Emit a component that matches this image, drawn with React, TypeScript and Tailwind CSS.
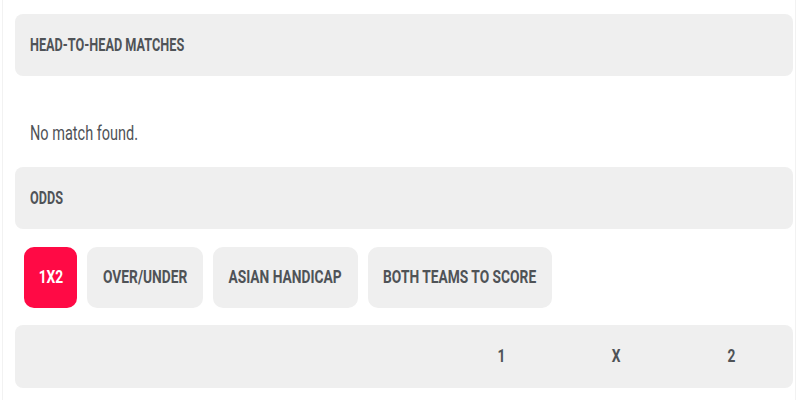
export default function App() {
  const tabs = [
    { label: "1X2", w: "w-[53px]" },
    { label: "OVER/UNDER", w: "w-[116px]" },
    { label: "ASIAN HANDICAP", w: "w-[145px]" },
    { label: "BOTH TEAMS TO SCORE", w: "w-[184px]" },
  ];

  // the source text is horizontally squeezed, so each label gets scale-x
  const squeeze = "inline-block whitespace-nowrap scale-x-[0.725]";

  return (
    <div className="w-[800px] h-[400px] bg-white font-['Roboto',sans-serif] text-[#4f5357]">
      <div className="ml-[2px] w-[794px] h-full border-l border-r border-[#f2f2f2] pl-[12px] pr-[2px] pt-[14px]">
        {/* HEAD TO HEAD */}
        <div className="h-[62px] rounded-lg bg-[#efefef] flex items-center px-[15px]">
          <span className={`${squeeze} origin-left text-[17.5px] font-bold`}>HEAD-TO-HEAD MATCHES</span>
        </div>

        <div className="h-[91px] flex items-end pb-[20px] px-[15px]">
          <span className={`${squeeze} origin-left text-[20px] leading-[28px]`}>No match found.</span>
        </div>

        {/* ODDS */}
        <div className="h-[62px] rounded-lg bg-[#efefef] flex items-center px-[15px]">
          <span className={`${squeeze} origin-left text-[17.5px] font-bold`}>ODDS</span>
        </div>

        <div className="mt-[18px] flex gap-[10px] pl-[9px]">
          {tabs.map((t, i) => (
            <button
              key={t.label}
              className={`${t.w} h-[61px] rounded-[10px] flex items-center justify-center text-[19px] font-bold ${
                i === 0 ? "bg-[#ff0a45] text-white" : "bg-[#efefef] text-[#4f5357]"
              }`}
            >
              <span className={squeeze}>{t.label}</span>
            </button>
          ))}
        </div>

        {/* ODDS TABLE HEADER */}
        <div className="mt-[17px] h-[63px] rounded-lg bg-[#efefef] flex justify-end items-center pr-[4px]">
          {["1", "X", "2"].map((c) => (
            <div key={c} className="w-[115px] flex justify-center text-[19px] font-bold">
              <span className={squeeze}>{c}</span>
            </div>
          ))}
        </div>
      </div>
    </div>
  );
}
